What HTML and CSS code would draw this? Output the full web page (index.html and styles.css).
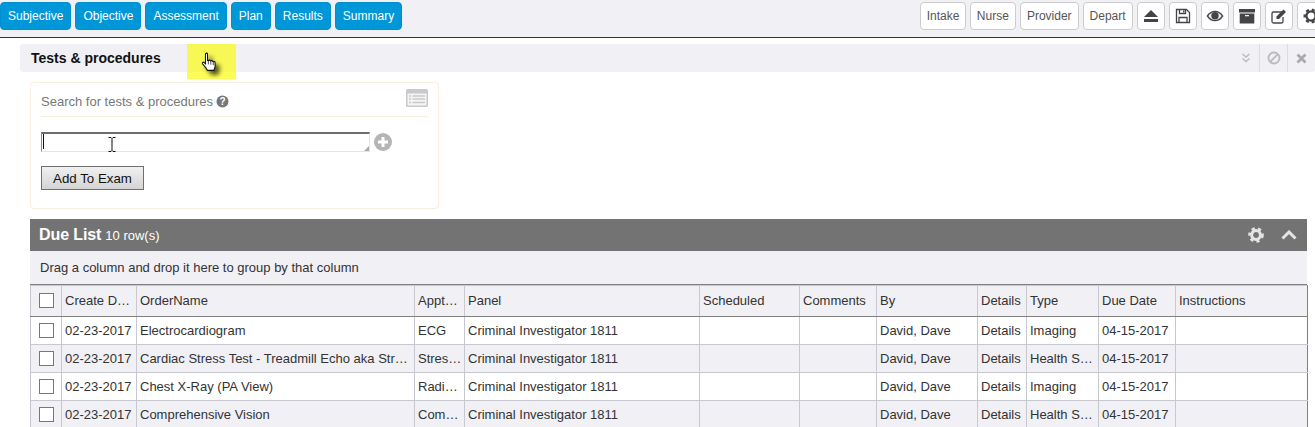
FILE: index.html
```html
<!DOCTYPE html>
<html lang="en">
<head>
    <meta charset="UTF-8">
    <meta name="viewport" content="width=device-width, initial-scale=1.0">
    <title>Tests &amp; procedures</title>
    <link rel="stylesheet" href="styles.css">
</head>
<body>
    <div class="toolbar">
        <div class="btn-group">
            <button class="btn btn-blue">Subjective</button>
            <button class="btn btn-blue">Objective</button>
            <button class="btn btn-blue">Assessment</button>
            <button class="btn btn-blue">Plan</button>
            <button class="btn btn-blue">Results</button>
            <button class="btn btn-blue">Summary</button>
        </div>
        <div class="btn-group btn-group-right">
            <button class="btn btn-role btn-intake">Intake</button>
            <button class="btn btn-role">Nurse</button>
            <button class="btn btn-role">Provider</button>
            <button class="btn btn-role">Depart</button>
            <button class="btn btn-icon">
                <svg width="16" height="14" viewBox="0 0 16 14"><path d="M8 1 15 8H1z" fill="#444"/><rect x="1" y="10" width="14" height="3" fill="#444"/></svg>
            </button>
            <button class="btn btn-icon">
                <svg width="16" height="16" viewBox="0 0 16 16"><path d="M1.500 1.500h10l3 3v10h-13z" fill="none" stroke="#444" stroke-width="1.300"/><path d="M4.500 1.500v4h6v-4M4 14.500v-5h8v5" fill="none" stroke="#444" stroke-width="1.300"/><rect x="8" y="2.500" width="1.400" height="2" fill="#444"/></svg>
            </button>
            <button class="btn btn-icon">
                <svg width="18" height="12" viewBox="0 0 18 12"><path d="M.5 6C3 2 6 .7 9 .7S15 2 17.500 6C15 10 12 11.300 9 11.300S3 10 .5 6z" fill="#444"/><path d="M2.300 6C4.200 3.300 6.500 2 9 2s4.800 1.300 6.700 4C13.800 8.700 11.500 10 9 10S4.200 8.700 2.300 6z" fill="#eee"/><circle cx="9" cy="5.800" r="3.700" fill="#444"/></svg>
            </button>
            <button class="btn btn-icon">
                <svg width="16" height="16" viewBox="0 0 16 16"><rect y="1" width="16" height="3.500" fill="#444"/><rect x="0.700" y="5.500" width="14.600" height="10" fill="#444"/><rect x="6" y="7" width="4" height="1.300" fill="#eee"/></svg>
            </button>
            <button class="btn btn-icon">
                <svg width="18" height="16" viewBox="0 0 18 16"><path d="M12 4H3.500A1.500 1.500 0 0 0 2 5.500v8A1.500 1.500 0 0 0 3.500 15h8a1.500 1.500 0 0 0 1.500-1.500V9" fill="none" stroke="#444" stroke-width="1.300"/><path d="M6.500 8.500 13.500 1.500l2.500 2.500-7 7H6.500z" fill="#444"/></svg>
            </button>
            <button class="btn btn-icon">
                <svg width="16" height="16" viewBox="0 0 16 16"><circle cx="8" cy="8" r="4.600" fill="none" stroke="#444" stroke-width="2.400"/><circle cx="8" cy="8" r="6.300" fill="none" stroke="#444" stroke-width="2.400" stroke-dasharray="3 2.950"/></svg>
            </button>
        </div>
    </div>

    <div class="panel-head">
        <span class="panel-title">Tests &amp; procedures</span>
        <span class="panel-tool">
            <svg width="10" height="10" viewBox="0 0 10 10"><path d="M1.500 1 5 4 8.500 1M1.500 5.500 5 8.500 8.500 5.500" fill="none" stroke="#bbb" stroke-width="1.400"/></svg>
        </span>
        <span class="panel-tool panel-tool-line">
            <svg width="14" height="14" viewBox="0 0 14 14"><circle cx="7" cy="7" r="5.500" fill="none" stroke="#bbb" stroke-width="1.800"/><path d="M3.200 10.800 10.800 3.200" stroke="#bbb" stroke-width="1.800"/></svg>
        </span>
        <span class="panel-tool panel-tool-line">
            <svg width="11" height="11" viewBox="0 0 11 11"><path d="M1.500 1.500 9.500 9.500M9.500 1.500 1.500 9.500" stroke="#aaa" stroke-width="2.800"/></svg>
        </span>
    </div>

    <!-- Highlight from the screen recorder -->
    <div class="pointer-mark">
        <svg class="hand" width="24" height="28" viewBox="0 0 24 28"><path d="M6.500 2.500c0-1.500 2.500-1.500 2.500 0v8l1 .1c0-1 2.400-1 2.400.3l.6.2c.2-1 2.400-.8 2.400.5l.6.3c.5-.7 2.200-.3 2.200 1v4.500c0 2-1 3-1.500 5H9c-1-2-4.500-6-6-8-1-1.500.8-2.800 2-1.600l1.500 1.500z" fill="#fff" stroke="#111" stroke-width="1.300"/><path d="M10 11v4M13 11.500v4M16 12v4" stroke="#111" stroke-width=".9"/></svg>
    </div>

    <div class="search-card">
        <div class="search-head">
            <span class="search-label">Search for tests &amp; procedures</span>
            <svg class="help-icon" width="13" height="13" viewBox="0 0 13 13"><circle cx="6.500" cy="6.500" r="6" fill="#777"/><text x="6.500" y="10" text-anchor="middle" class="help-mark">?</text></svg>
            <svg class="list-icon" width="22" height="18" viewBox="0 0 22 18"><rect width="22" height="18" rx="1.500" fill="#c9c9c9"/><rect x="1.500" y="4.500" width="19" height="12" fill="#f4f4f4"/><path d="M3 7h2M3 10h2M3 13.500h2M6.500 7H19M6.500 10H19M6.500 13.500H19" stroke="#c9c9c9" stroke-width="1.400"/></svg>
        </div>
        <div class="search-row">
            <div class="search-box">
                <textarea class="search-input"></textarea>
                <span class="text-caret"></span>
                <svg class="ibeam" width="8" height="15" viewBox="0 0 8 15"><path d="M.5.500h2.500l1 1 1-1h2.500M4 1.500v12M.5 14.500h2.500l1-1 1 1h2.500" fill="none" stroke="#111"/></svg>
            </div>
            <svg class="plus-icon" width="18" height="18" viewBox="0 0 18 18"><circle cx="9" cy="9" r="9" fill="#b5b5b5"/><path d="M9 4v10M4 9h10" stroke="#fff" stroke-width="3"/></svg>
        </div>
        <button class="add-btn">Add To Exam</button>
    </div>

    <div class="due-list">
        <div class="due-head">
            <span class="due-title">Due List</span>
            <span class="due-count">10 row(s)</span>
            <svg class="due-gear" width="16" height="16" viewBox="0 0 16 16"><circle cx="8" cy="8" r="4.400" fill="none" stroke="#e4e4e4" stroke-width="3"/><circle cx="8" cy="8" r="6.500" fill="none" stroke="#e4e4e4" stroke-width="2.600" stroke-dasharray="3.100 3.280"/></svg>
            <svg class="due-arrow" width="16" height="10" viewBox="0 0 16 10"><path d="M1.500 8.500 8 2l6.500 6.500" fill="none" stroke="#e4e4e4" stroke-width="3"/></svg>
        </div>
        <div class="group-bar">Drag a column and drop it here to group by that column</div>
        <table class="grid">
            <colgroup>
                <col class="c-check">
                <col class="c-create">
                <col class="c-order">
                <col class="c-appt">
                <col class="c-panel">
                <col class="c-sched">
                <col class="c-comm">
                <col class="c-by">
                <col class="c-details">
                <col class="c-type">
                <col class="c-due">
                <col class="c-instr">
            </colgroup>
            <thead>
                <tr>
                    <th><input type="checkbox" class="check"></th>
                    <th>Create D…</th>
                    <th>OrderName</th>
                    <th class="th-resize">Appt…</th>
                    <th>Panel</th>
                    <th>Scheduled</th>
                    <th>Comments</th>
                    <th>By</th>
                    <th>Details</th>
                    <th>Type</th>
                    <th>Due Date</th>
                    <th>Instructions</th>
                </tr>
            </thead>
            <tbody>
                <tr>
                    <td><input type="checkbox" class="check"></td>
                    <td>02-23-2017</td>
                    <td>Electrocardiogram</td>
                    <td>ECG</td>
                    <td>Criminal Investigator 1811</td>
                    <td></td>
                    <td></td>
                    <td>David, Dave</td>
                    <td>Details</td>
                    <td>Imaging</td>
                    <td>04-15-2017</td>
                    <td></td>
                </tr>
                <tr>
                    <td><input type="checkbox" class="check"></td>
                    <td>02-23-2017</td>
                    <td>Cardiac Stress Test - Treadmill Echo aka Str…</td>
                    <td>Stres…</td>
                    <td>Criminal Investigator 1811</td>
                    <td></td>
                    <td></td>
                    <td>David, Dave</td>
                    <td>Details</td>
                    <td>Health S…</td>
                    <td>04-15-2017</td>
                    <td></td>
                </tr>
                <tr>
                    <td><input type="checkbox" class="check"></td>
                    <td>02-23-2017</td>
                    <td>Chest X-Ray (PA View)</td>
                    <td>Radi…</td>
                    <td>Criminal Investigator 1811</td>
                    <td></td>
                    <td></td>
                    <td>David, Dave</td>
                    <td>Details</td>
                    <td>Imaging</td>
                    <td>04-15-2017</td>
                    <td></td>
                </tr>
                <tr>
                    <td><input type="checkbox" class="check"></td>
                    <td>02-23-2017</td>
                    <td>Comprehensive Vision</td>
                    <td>Com…</td>
                    <td>Criminal Investigator 1811</td>
                    <td></td>
                    <td></td>
                    <td>David, Dave</td>
                    <td>Details</td>
                    <td>Health S…</td>
                    <td>04-15-2017</td>
                    <td></td>
                </tr>
            </tbody>
        </table>
    </div>
</body>
</html>
```

FILE: styles.css
```css
html, body {
    height: 100%;
    overflow: hidden;
}
body {
    margin: 0;
    position: relative;
    font-family: "Liberation Sans", Arial, sans-serif;
    font-size: 13px;
    color: #333;
    background: #fff;
}
.toolbar {
    display: flex;
    height: 35px;
    padding-top: 2px;
    background: #f0f0f5;
    border-bottom: 1px solid #333;
    overflow: hidden;
}
.btn-group {
    display: flex;
    flex: none;
    gap: 4px;
}
.btn-group-right {
    margin-left: 518px;
}
.btn {
    display: flex;
    align-items: center;
    justify-content: center;
    flex: none;
    height: 28px;
    padding: 0 7px;
    border: 1px solid #ccc;
    border-radius: 4px;
    background: #fff;
    color: #555;
    font-family: inherit;
    font-size: 12px;
}
.btn-blue {
    background: #0097d8;
    border-color: #0090cf;
    color: #fff;
}
.btn-role {
    padding: 0 6px;
}
.btn-intake {
    padding: 0 5.5px;
}
.btn-icon {
    width: 28px;
    padding: 0;
}
.panel-head {
    display: flex;
    align-items: center;
    height: 28px;
    margin: 6px 0 10px 20px;
    padding-left: 11px;
    background: #f0f0f5;
    border-radius: 4px;
}
.panel-title {
    flex: 1;
    font-size: 14px;
    font-weight: bold;
    color: #111;
}
.panel-tool {
    display: flex;
    align-items: center;
    justify-content: center;
    width: 27px;
    height: 28px;
}
.panel-tool-line {
    border-left: 1px solid #ddd;
}
.pointer-mark {
    position: absolute;
    left: 187px;
    top: 44px;
    width: 49px;
    height: 35px;
    background: rgba(250, 250, 0, .65);
}
.hand {
    position: absolute;
    left: 13px;
    top: 8px;
    width: 20px;
    height: 23px;
    filter: drop-shadow(4px 4px 2px rgba(50, 50, 0, .8));
}
.search-card {
    width: 387px;
    height: 125px;
    margin-left: 30px;
    padding-left: 10px;
    padding-right: 10px;
    border: 1px solid #f8efdf;
    border-radius: 4px;
    box-shadow: 0 0 1px #f8efdf;
}
.search-head {
    position: relative;
    display: flex;
    align-items: center;
    gap: 3px;
    height: 29px;
    padding-top: 4px;
    border-bottom: 1px solid #f8efdf;
    color: #777;
}
.search-label {
    font-size: 13px;
}
.list-icon {
    position: absolute;
    right: 0;
    top: 6px;
}
.help-mark {
    font-size: 10px;
    font-weight: bold;
    fill: #fff;
}
.search-row {
    display: flex;
    align-items: center;
    gap: 4px;
    margin-top: 15px;
}
.search-box {
    position: relative;
    display: flex;
    width: 329px;
    height: 20px;
}
.search-box::after {
    content: "";
    position: absolute;
    right: 1px;
    bottom: 1px;
    border-style: solid;
    border-width: 0 0 5px 5px;
    border-color: transparent transparent #aaa transparent;
}
.search-input {
    flex: 1;
    margin: 0;
    padding: 0;
    height: 20px;
    box-sizing: border-box;
    border-style: solid;
    border-width: 2px 1px 1px 1px;
    border-color: #6e6e6e #e4e4e4 #e4e4e4 #8a8a8a;
    outline: none;
    resize: none;
}
.text-caret {
    position: absolute;
    left: 2px;
    top: 2px;
    width: 1px;
    height: 15px;
    background: #111;
}
.ibeam {
    position: absolute;
    left: 67px;
    top: 5px;
}
.add-btn {
    display: block;
    width: 103px;
    height: 24px;
    margin-top: 14px;
    padding: 0;
    border: 1px solid #707070;
    background: linear-gradient(#f0f0f0, #d4d4d4);
    font-family: inherit;
    font-size: 13.3px;
    color: #111;
}
.due-list {
    width: 1277px;
    margin: 10px 0 0 30px;
}
.due-head {
    display: flex;
    align-items: center;
    height: 32px;
    padding: 0 10px 0 9px;
    background: #737373;
    color: #fff;
}
.due-title {
    font-size: 16px;
    font-weight: bold;
    letter-spacing: -.1px;
}
.due-count {
    flex: 1;
    margin-left: 4px;
    font-size: 13px;
    padding-top: 1px;
}
.due-arrow {
    margin-left: 17px;
}
.group-bar {
    display: flex;
    align-items: center;
    height: 33px;
    padding-left: 10px;
    background: #f0f0f5;
    border-bottom: 1px solid #808080;
    font-size: 13px;
}
.grid {
    width: 1277px;
    table-layout: fixed;
    border-collapse: collapse;
    font-size: 13px;
}
.c-check { width: 31px; }
.c-create { width: 75px; }
.c-order { width: 278px; }
.c-appt { width: 50px; }
.c-panel { width: 235px; }
.c-sched { width: 100px; }
.c-comm { width: 77px; }
.c-by { width: 101px; }
.c-details { width: 49px; }
.c-type { width: 72px; }
.c-due { width: 77px; }
.c-instr { width: 132px; }
.grid th, .grid td {
    padding: 0 3px;
    border: 1px solid #c8c8d0;
    white-space: nowrap;
    overflow: hidden;
    text-align: left;
    font-weight: normal;
}
.grid th {
    height: 31px;
    padding-bottom: 1px;
    box-sizing: border-box;
    background: #f0f0f5;
    border-bottom-color: #808080;
}
.grid td {
    height: 27px;
}
.grid tbody tr:nth-child(even) td {
    background: #f0f0f5;
}
.th-resize {
    border-right: 2px solid #c8c8d0;
}
.grid th:last-child, .grid td:last-child {
    border-right-color: #808080;
}
.check {
    appearance: none;
    display: block;
    width: 15px;
    height: 15px;
    margin: 0 0 0 5px;
    border: 1px solid #777;
    background: #fff;
}
```
